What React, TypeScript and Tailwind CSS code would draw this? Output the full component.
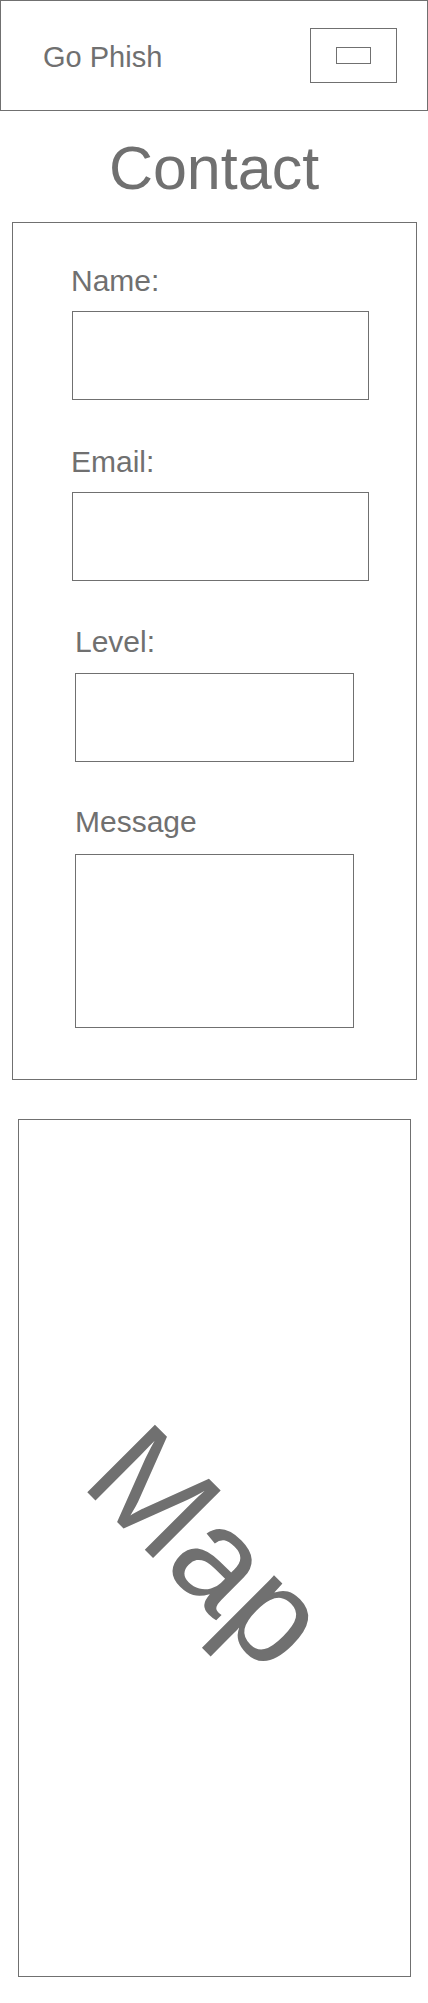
import React from "react";

const font = { fontFamily: '"Liberation Sans", Arial, Helvetica, sans-serif' };

const Field = ({
  label,
  offset,
  width,
  height,
  gapTop,
  inputGap,
  multiline,
}: {
  label: string;
  offset: "wide" | "narrow";
  width: string;
  height: string;
  gapTop: string;
  inputGap: string;
  multiline?: boolean;
}) => {
  const labelCls =
    offset === "wide" ? "ml-[58px]" : "ml-[62px]";
  const boxCls = offset === "wide" ? "ml-[59px]" : "ml-[62px]";
  return (
    <div className={gapTop}>
      <label className={`block text-[30px] leading-[29px] text-[#707070] ${labelCls}`}>
        {label}
      </label>
      {multiline ? (
        <textarea
          className={`block resize-none border border-[#707070] bg-white outline-none ${inputGap} ${boxCls} ${width} ${height}`}
        />
      ) : (
        <input
          type="text"
          className={`block border border-[#707070] bg-white outline-none ${inputGap} ${boxCls} ${width} ${height}`}
        />
      )}
    </div>
  );
};

export default function App() {
  return (
    <div className="w-[428px] bg-white pb-[26px]" style={font}>
      {/* nav */}
      <header className="flex h-[111px] items-center justify-between border border-[#707070] pl-[42px] pr-[30px]">
        <span className="mt-[4px] text-[29px] leading-[29px] text-[#707070]">Go Phish</span>
        <button className="flex h-[55px] w-[87px] items-center justify-center border border-[#707070]">
          <span className="block h-[17px] w-[35px] border border-[#707070]" />
        </button>
      </header>

      <h1 className="mt-[27px] text-center text-[61px] leading-[61px] text-[#707070]">Contact</h1>

      <form className="ml-[12px] mt-[23px] w-[405px] border border-[#707070] pb-[51px] pt-[43px]">
        <Field label="Name:" offset="wide" width="w-[297px]" height="h-[89px]" gapTop="" inputGap="mt-[16px]" />
        <Field label="Email:" offset="wide" width="w-[297px]" height="h-[89px]" gapTop="mt-[47px]" inputGap="mt-[16px]" />
        <Field label="Level:" offset="narrow" width="w-[279px]" height="h-[89px]" gapTop="mt-[46px]" inputGap="mt-[17px]" />
        <Field label="Message" offset="narrow" width="w-[279px]" height="h-[174px]" gapTop="mt-[45px]" inputGap="mt-[18px]" multiline />
      </form>

      {/* map placeholder */}
      <div className="relative ml-[18px] mt-[39px] flex h-[858px] w-[393px] items-center justify-center overflow-hidden border border-[#707070]">
        <span className="block -translate-x-[5px] -translate-y-[3px] rotate-45 text-[139px] leading-none text-[#707070]">Map</span>
      </div>
    </div>
  );
}
